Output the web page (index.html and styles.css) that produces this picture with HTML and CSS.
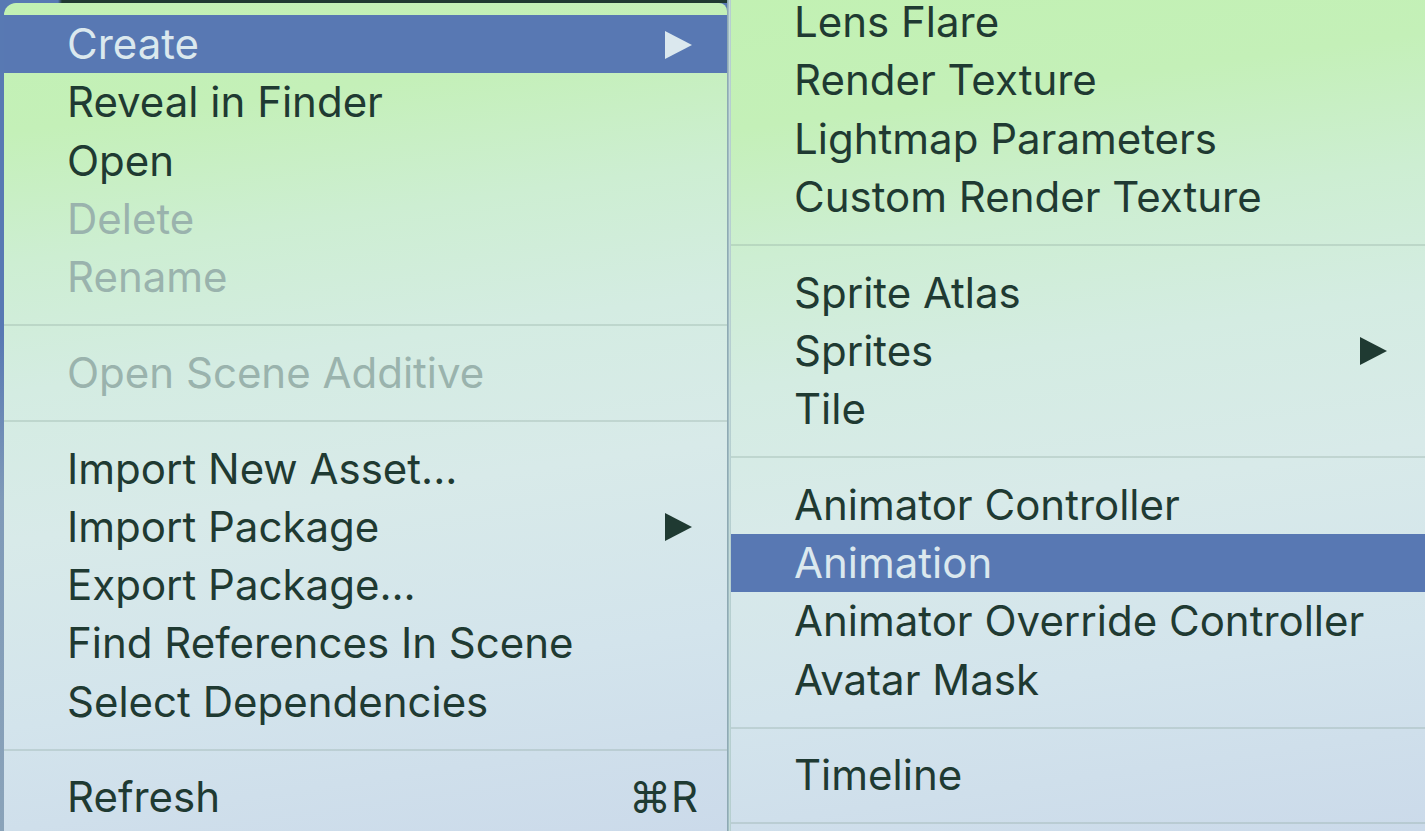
FILE: index.html
```html
<!DOCTYPE html>
<html>
<head>
<meta charset="utf-8">
<link rel="stylesheet" href="styles.css">
</head>
<body>
<div class="screen">
  <div class="left-col">
    <div class="topbar"></div>
    <div class="left-wrap">
      <div class="strip"></div>
      <div class="menu menu-left">
        <div class="item active"><span>Create</span><span class="arrow"></span></div>
        <div class="item"><span>Reveal in Finder</span></div>
        <div class="item"><span>Open</span></div>
        <div class="item disabled"><span>Delete</span></div>
        <div class="item disabled"><span>Rename</span></div>
        <div class="sep"></div>
        <div class="item disabled"><span>Open Scene Additive</span></div>
        <div class="sep"></div>
        <div class="item"><span>Import New Asset...</span></div>
        <div class="item"><span>Import Package</span><span class="arrow"></span></div>
        <div class="item"><span>Export Package...</span></div>
        <div class="item"><span>Find References In Scene</span></div>
        <div class="item"><span>Select Dependencies</span></div>
        <div class="sep"></div>
        <div class="item"><span>Refresh</span><span class="shortcut">⌘R</span></div>
      </div>
    </div>
  </div>
  <div class="divider"></div>
  <div class="menu menu-right">
    <div class="item first"><span>Lens Flare</span></div>
    <div class="item"><span>Render Texture</span></div>
    <div class="item"><span>Lightmap Parameters</span></div>
    <div class="item"><span>Custom Render Texture</span></div>
    <div class="sep"></div>
    <div class="item"><span>Sprite Atlas</span></div>
    <div class="item"><span>Sprites</span><span class="arrow"></span></div>
    <div class="item"><span>Tile</span></div>
    <div class="sep"></div>
    <div class="item"><span>Animator Controller</span></div>
    <div class="item active"><span>Animation</span></div>
    <div class="item"><span>Animator Override Controller</span></div>
    <div class="item"><span>Avatar Mask</span></div>
    <div class="sep"></div>
    <div class="item"><span>Timeline</span></div>
    <div class="sep"></div>
  </div>
</div>
</body>
</html>
```

FILE: styles.css
```css
html, body {
  margin: 0;
  padding: 0;
  width: 1425px;
  height: 831px;
  overflow: hidden;
  background: #5879b3;
}

.screen {
  display: flex;
  width: 1425px;
  height: 831px;
  font-family: Inter, "Liberation Sans", sans-serif;
  font-size: 42px;
  line-height: 44px;
  color: #1f3a32;
}

.left-col {
  display: flex;
  flex-direction: column;
  width: 727px;
  flex: none;
}

.topbar {
  height: 3px;
  flex: none;
  background: linear-gradient(to right, #5879b3 0, #5879b3 58px, #203a31 62px, #203a31 100%);
}

.left-wrap {
  display: flex;
  flex: 1;
  min-height: 0;
}

.strip {
  width: 4px;
  flex: none;
  background: linear-gradient(to bottom, #5879b3 0, #5879b3 40%, #7f9ab8 60%, #8aa3b9 100%);
}

.menu {
  background: linear-gradient(172deg, #c2f1b3 0%, #c4f0b8 14%, #cdeed2 28%, #d4ece2 42%, #d8eae9 58%, #d3e4ec 78%, #cbdaea 100%);
  overflow: hidden;
}

.menu-left {
  flex: 1;
  border-top-left-radius: 12px;
  border-top-right-radius: 8px;
  padding-top: 12px;
}

.divider {
  width: 3px;
  flex: none;
  background: linear-gradient(to right, #9fb8b6 0, #7e9cb0 1px, #c4dcd8 2px);
}

.menu-right {
  flex: 1;
  border-left: 1px solid #b6cfd0;
}

.item {
  height: 58.25px;
  display: flex;
  align-items: center;
  justify-content: space-between;
  padding-left: 63px;
  padding-right: 35px;
  white-space: nowrap;
}

.menu-right .item {
  padding-left: 63px;
  padding-right: 38px;
}

.menu-right .item.first {
  height: 51.25px;
  align-items: flex-start;
}

.item.active {
  background: #5878b3;
  color: #dbe8ee;
}

.item.disabled {
  color: #9ab3ad;
}

.arrow {
  width: 0;
  height: 0;
  border-top: 14.5px solid transparent;
  border-bottom: 14.5px solid transparent;
  border-left: 27px solid #1f3a32;
  margin-top: 1px;
}

.item.active .arrow {
  border-left-color: #dbe8ee;
}

.shortcut {
  font-family: Inter, "DejaVu Sans", sans-serif;
  margin-right: -6px;
}

.sep {
  height: 37.5px;
  display: flex;
  align-items: center;
}

.sep::before {
  content: "";
  display: block;
  width: 100%;
  height: 2px;
  background: rgba(140, 165, 155, 0.3);
}
```
